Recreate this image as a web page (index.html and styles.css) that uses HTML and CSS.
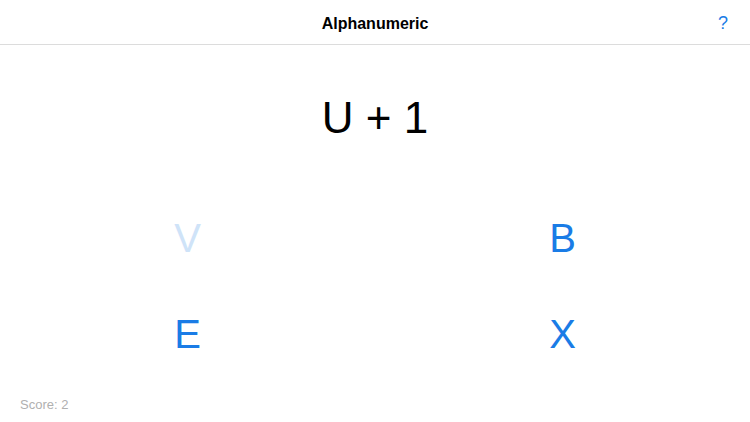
FILE: index.html
```html
<!DOCTYPE html>
<html>
<head>
<meta charset="utf-8">
<link rel="stylesheet" href="styles.css">
</head>
<body>
<header class="topbar">
  <div class="title">Alphanumeric</div>
  <div class="help">?</div>
</header>
<main class="game">
  <div class="equation">U + 1</div>
  <div class="choices">
    <div class="choice used">V</div>
    <div class="choice">B</div>
    <div class="choice">E</div>
    <div class="choice">X</div>
  </div>
  <div class="score">Score: 2</div>
</main>
</body>
</html>
```

FILE: styles.css
```css
html, body {
  margin: 0;
  padding: 0;
  background: #ffffff;
  font-family: "Liberation Sans", Arial, sans-serif;
}

.topbar {
  position: relative;
  height: 41px;
  padding-top: 3px;
  border-bottom: 1px solid #dcdcdc;
  display: flex;
  justify-content: center;
}

.title {
  font-size: 16px;
  font-weight: 700;
  line-height: 41px;
  color: #000;
}

.help {
  position: absolute;
  right: 22px;
  top: 3px;
  line-height: 41px;
  font-size: 18px;
  color: #1a7ce6;
}

.game {
  display: flex;
  flex-direction: column;
}

.equation {
  margin-top: 45px;
  font-size: 44px;
  line-height: 56px;
  text-align: center;
  color: #000;
}

.choices {
  margin-top: 44px;
  display: grid;
  grid-template-columns: 1fr 1fr;
  grid-auto-rows: 96px;
}

.choice {
  font-size: 40px;
  line-height: 96px;
  text-align: center;
  color: #1a7ce6;
}

.choice.used {
  color: #cfe3f8;
}

.score {
  margin-top: 15px;
  padding-left: 20px;
  font-size: 13px;
  line-height: 16px;
  color: #b0b0b0;
}
```
